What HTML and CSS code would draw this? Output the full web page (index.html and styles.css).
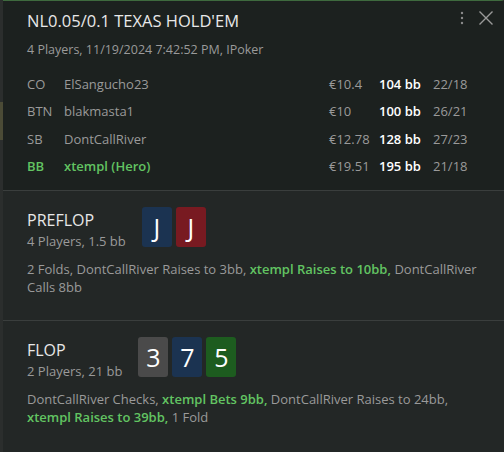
FILE: index.html
```html
<!DOCTYPE html>
<html>
<head>
<meta charset="utf-8">
<link rel="stylesheet" href="styles.css">
</head>
<body>
<div class="frame">
  <div class="rail"><div class="rail-mark"></div></div>
  <div class="panel">
    <header class="head">
      <div class="head-top">
        <h1 class="title">NL0.05/0.1 TEXAS HOLD'EM</h1>
        <div class="tools">
          <svg class="kebab" width="4" height="14" viewBox="0 0 4 14"><circle cx="2" cy="2" r="1.2"/><circle cx="2" cy="7" r="1.2"/><circle cx="2" cy="12" r="1.2"/></svg>
          <svg class="close" width="16" height="16" viewBox="0 0 16 16"><path d="M1.5 1.5 L14.5 14.5 M14.5 1.5 L1.5 14.5"/></svg>
        </div>
      </div>
      <div class="sub">4 Players, 11/19/2024 7:42:52 PM, IPoker</div>
      <div class="players">
        <div class="row"><span class="pos">CO</span><span class="name">ElSangucho23</span><span class="eur">€10.4</span><span class="bb">104 bb</span><span class="st">22/18</span></div>
        <div class="row"><span class="pos">BTN</span><span class="name">blakmasta1</span><span class="eur">€10</span><span class="bb">100 bb</span><span class="st">26/21</span></div>
        <div class="row"><span class="pos">SB</span><span class="name">DontCallRiver</span><span class="eur">€12.78</span><span class="bb">128 bb</span><span class="st">27/23</span></div>
        <div class="row hero"><span class="pos">BB</span><span class="name">xtempl (Hero)</span><span class="eur">€19.51</span><span class="bb">195 bb</span><span class="st">21/18</span></div>
      </div>
    </header>
    <section class="street">
      <div class="street-top">
        <div class="street-info">
          <div class="street-name">PREFLOP</div>
          <div class="street-sub">4 Players, 1.5 bb</div>
        </div>
        <div class="cards">
          <div class="card blue">J</div>
          <div class="card red">J</div>
        </div>
      </div>
      <p class="actions"><span>2 Folds, DontCallRiver Raises to 3bb,</span> <span class="me">xtempl Raises to 10bb,</span> <span>DontCallRiver</span> <span>Calls 8bb</span></p>
    </section>
    <section class="street">
      <div class="street-top">
        <div class="street-info">
          <div class="street-name">FLOP</div>
          <div class="street-sub">2 Players, 21 bb</div>
        </div>
        <div class="cards">
          <div class="card gray">3</div>
          <div class="card blue">7</div>
          <div class="card green">5</div>
        </div>
      </div>
      <p class="actions"><span>DontCallRiver Checks,</span> <span class="me">xtempl Bets 9bb,</span> <span>DontCallRiver Raises to 24bb,</span> <span class="me">xtempl Raises to 39bb,</span> <span>1 Fold</span></p>
    </section>
  </div>
</div>
</body>
</html>
```
FILE: styles.css
```css
html, body {
  margin: 0;
  padding: 0;
  background: #2a2d2c;
  font-family: "Open Sans", "Noto Sans", sans-serif;
}
.frame {
  display: flex;
  width: 504px;
  height: 452px;
  overflow: hidden;
}
.rail {
  width: 3px;
  flex: none;
  background: #2b2e2d;
  padding-top: 102px;
  box-sizing: border-box;
}
.rail-mark {
  height: 38px;
  background: #4b4b36;
}
.panel {
  flex: 1;
  display: flex;
  flex-direction: column;
  background: #232726;
  border-top: 1px solid #3e6a3e;
  border-top-right-radius: 3px;
}
.head {
  background: #1c211f;
  padding: 8px 10px 10px 24px;
  border-bottom: 1px solid #3a3e3d;
  height: 190px;
  box-sizing: border-box;
}
.head-top {
  display: flex;
  justify-content: space-between;
  align-items: flex-start;
  height: 24px;
}
.title {
  margin: 0;
  font-weight: 400;
  font-size: 16.5px;
  line-height: 24px;
  color: #e8e8e8;
}
.tools {
  display: flex;
  align-items: center;
  gap: 14px;
  padding-top: 1px;
}
.kebab circle { fill: #8c8c8c; }
.close path { stroke: #9a9a9a; stroke-width: 1.4; fill: none; }
.sub {
  margin-top: 8px;
  font-size: 12.5px;
  line-height: 18px;
  color: #9a9a9a;
}
.players {
  margin-top: 11px;
  padding-right: 17px;
}
.row {
  display: grid;
  grid-template-columns: 37px 1fr 50px 54px 44px;
  height: 27.5px;
  align-items: center;
  font-size: 13px;
  color: #9a9a9a;
}
.row .bb {
  color: #ffffff;
  font-weight: 600;
}
.row.hero .pos, .row.hero .name {
  color: #62c462;
  font-weight: 600;
}
.street {
  padding: 16px 24px 0 24px;
  border-bottom: 1px solid #3a3e3d;
  height: 130px;
  box-sizing: border-box;
  flex: none;
}
.street:last-child { border-bottom: none; flex: 1; }
.street-top {
  display: flex;
  align-items: flex-start;
  gap: 16px;
  height: 42px;
}
.street-info { padding-top: 2px; }
.street-name {
  font-size: 16px;
  line-height: 22px;
  color: #e8e8e8;
}
.street-sub {
  font-size: 13px;
  line-height: 19px;
  color: #9a9a9a;
  padding-top: 1px;
}
.cards {
  display: flex;
  gap: 4px;
}
.card {
  width: 30px;
  height: 40px;
  border-radius: 3px;
  color: #ffffff;
  font-size: 25px;
  line-height: 40px;
  text-align: center;
}
.card.blue { background: #1b3351; }
.card.red { background: #781a21; }
.card.gray { background: #4a4a4a; }
.card.green { background: #1d5c1f; }
.actions {
  margin: 11px 0 0 0;
  font-size: 13px;
  line-height: 18px;
  color: #9a9a9a;
}
.me {
  color: #62c462;
  font-weight: 600;
}
```
